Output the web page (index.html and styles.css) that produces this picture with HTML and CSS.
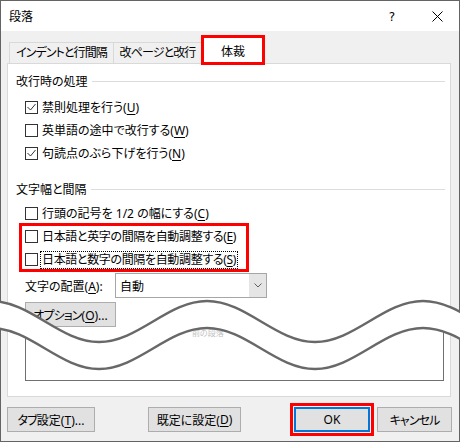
FILE: index.html
```html
<!DOCTYPE html>
<html lang="ja">
<head>
<meta charset="utf-8">
<title>段落</title>
<link rel="stylesheet" href="styles.css">
</head>
<body>
<div class="window">
  <div class="titlebar">
    <span class="title">段落</span>
    <span class="tb-btn help">?</span>
    <span class="tb-btn close"><svg width="11" height="11" viewBox="0 0 11 11"><path d="M0.5 0.5L10.5 10.5M10.5 0.5L0.5 10.5" stroke="#000" stroke-width="1" fill="none"/></svg></span>
  </div>
  <div class="tabs">
    <div class="tab tab-first"><span class="kana">インデントと行間隔</span></div>
    <div class="tab tab-second"><span class="kana">改ページと改行</span></div>
    <div class="tab tab-active">体裁</div>
  </div>
  <div class="panel">
    <div class="group-head"><span>改行時の処理</span><i class="rule"></i></div>
    <div class="rows">
      <div class="check-row"><span class="box"><svg width="11" height="11" viewBox="0 0 11 11"><polyline points="1.5,5 4.5,8 9.5,2" fill="none" stroke="#333" stroke-width="1"/></svg></span><span class="label">禁則処理を行う(<u>U</u>)</span></div>
      <div class="check-row"><span class="box"></span><span class="label">英単語の途中で改行する(<u>W</u>)</span></div>
      <div class="check-row"><span class="box"><svg width="11" height="11" viewBox="0 0 11 11"><polyline points="1.5,5 4.5,8 9.5,2" fill="none" stroke="#333" stroke-width="1"/></svg></span><span class="label">句読点のぶら下げを行う(<u>N</u>)</span></div>
    </div>
    <div class="group-head gh2"><span>文字幅と間隔</span><i class="rule"></i></div>
    <div class="check-row r4"><span class="box"></span><span class="label">行頭の記号を 1/2 の幅にする(<u>C</u>)</span></div>
    <div class="hl">
      <div class="check-row"><span class="box"></span><span class="label tight">日本語と英字の間隔を自動調整する(<u>E</u>)</span></div>
      <div class="check-row"><span class="box"></span><span class="label tight focus">日本語と数字の間隔を自動調整する(<u>S</u>)</span></div>
    </div>
    <div class="select-row">
      <span class="sel-label">文字の配置(<u>A</u>):</span>
      <div class="select"><span class="sel-value">自動</span><span class="sel-btn"><svg width="8" height="5" viewBox="0 0 8 5"><polyline points="0.5,0.5 4,4 7.5,0.5" fill="none" stroke="#606060" stroke-width="1"/></svg></span></div>
    </div>
    <div class="btn opt"><span><span class="kana">オプション</span>(<u>O</u>)...</span></div>
    <div class="preview"><div class="pv-text">前の段落</div></div>
  </div>
  <div class="footer">
    <div class="btn b-tab"><span><span class="kana">タブ</span>設定(<u>T</u>)...</span></div>
    <div class="btn b-def">既定に設定(<u>D</u>)</div>
    <div class="btn b-ok">OK</div>
    <div class="btn b-cancel"><span class="kana">キャンセル</span></div>
  </div>
</div>
<svg class="cut" width="460" height="442" viewBox="0 0 460 442">
  <path d="M-9 301 C30.3 301 59.7 342 99 342 C138.3 342 167.7 301 207 301 C246.3 301 275.7 342 315 342 C354.3 342 383.7 301 423 301 C462.3 301 491.7 342 531 342 L531 369 C491.7 369 462.3 328 423 328 C383.7 328 354.3 369 315 369 C275.7 369 246.3 328 207 328 C167.7 328 138.3 369 99 369 C59.7 369 30.3 328 -9 328 Z" fill="#fff"/>
  <path d="M-9 301 C30.3 301 59.7 342 99 342 C138.3 342 167.7 301 207 301 C246.3 301 275.7 342 315 342 C354.3 342 383.7 301 423 301 C462.3 301 491.7 342 531 342" fill="none" stroke="#686868" stroke-width="2.4"/>
  <path d="M-9 328 C30.3 328 59.7 369 99 369 C138.3 369 167.7 328 207 328 C246.3 328 275.7 369 315 369 C354.3 369 383.7 328 423 328 C462.3 328 491.7 369 531 369" fill="none" stroke="#686868" stroke-width="2.4"/>
</svg>
</body>
</html>
```

FILE: styles.css
```css
html, body {
  margin: 0;
  padding: 0;
}
body {
  width: 460px;
  height: 442px;
  overflow: hidden;
  font-family: "Noto Sans", "Noto Sans CJK JP", sans-serif;
  font-size: 12px;
  font-feature-settings: "palt" 1;
  color: #000;
}
.window {
  box-sizing: border-box;
  width: 460px;
  height: 442px;
  border: 1px solid #646464;
  background: #f0f0f0;
}
.titlebar {
  height: 30px;
  background: #fff;
  display: flex;
  align-items: center;
  padding-left: 8px;
}
.title {
  line-height: 16px;
  margin-top: 1px;
}
.tb-btn {
  height: 30px;
  display: flex;
  align-items: center;
  justify-content: center;
}
.help {
  margin-left: auto;
  width: 46px;
  font-family: "DejaVu Sans", sans-serif;
  font-size: 12px;
  margin-top: 1px;
}
.close {
  width: 44px;
}
.kana {
  letter-spacing: -0.9px;
}
.tabs {
  height: 32px;
  display: flex;
  align-items: flex-end;
  padding-left: 8px;
}
.tab {
  box-sizing: border-box;
  height: 21px;
  border-top: 1px solid #d9d9d9;
  display: flex;
  align-items: center;
  justify-content: center;
  line-height: 18px;
  white-space: nowrap;
}
.tab-first {
  width: 105px;
  border-left: 1px solid #d9d9d9;
  border-right: 1px solid #d9d9d9;
}
.tab-second {
  width: 87px;
}
.tab-active {
  width: 64px;
  height: 30px;
  margin-bottom: -2px;
  border: 3px solid #ff0000;
  background: #fff;
  align-items: flex-start;
  padding-top: 5px;
  position: relative;
  z-index: 1;
}
.panel {
  box-sizing: border-box;
  margin-left: 6px;
  width: 444px;
  height: 334px;
  border: 1px solid #d9d9d9;
  background: #fff;
  padding-top: 6px;
}
.group-head {
  height: 22px;
  display: flex;
  align-items: center;
  padding-left: 8px;
  white-space: nowrap;
}
.rule {
  flex: 1;
  height: 1px;
  background: #dcdcdc;
  margin-left: 4px;
  margin-right: 5px;
}
.rows {
  margin-top: 4px;
}
.gh2 {
  margin-top: 13px;
}
.check-row {
  height: 23px;
  display: flex;
  align-items: center;
  padding-left: 17px;
  white-space: nowrap;
}
.r4 {
  margin-top: 2px;
}
.box {
  box-sizing: border-box;
  width: 13px;
  height: 13px;
  border: 1px solid #333;
  background: #fff;
  margin-right: 2px;
  display: flex;
}
.label {
  border: 1px solid transparent;
  padding: 0 1px;
  line-height: 16px;
}
.label.tight {
  letter-spacing: -0.35px;
}
.label.focus {
  border: 1px dotted #000;
}
u {
  text-underline-offset: 2px;
}
.hl {
  position: relative;
}
.hl::after {
  content: "";
  position: absolute;
  left: 11px;
  top: -2px;
  bottom: -1px;
  width: 230px;
  box-sizing: border-box;
  border: 3px solid #ff0000;
  pointer-events: none;
}
.select-row {
  margin-top: 2px;
  height: 25px;
  display: flex;
  align-items: center;
  padding-left: 17px;
}
.sel-label {
  width: 90px;
  white-space: nowrap;
}
.select {
  box-sizing: border-box;
  width: 152px;
  height: 25px;
  border: 1px solid #a6a6a6;
  background: #fff;
  display: flex;
}
.sel-value {
  flex: 1;
  padding-left: 4px;
  display: flex;
  align-items: center;
}
.sel-btn {
  width: 17px;
  background: #e5e5e5;
  display: flex;
  align-items: center;
  justify-content: center;
}
.btn {
  box-sizing: border-box;
  height: 25px;
  border: 1px solid #adadad;
  background: #e1e1e1;
  display: flex;
  align-items: center;
  justify-content: center;
  white-space: nowrap;
}
.opt {
  margin-top: 4px;
  margin-left: 17px;
  width: 91px;
}
.preview {
  box-sizing: border-box;
  margin-left: 17px;
  width: 419px;
  height: 54px;
  border: 1px solid #707070;
  border-top: none;
  overflow: hidden;
}
.pv-text {
  padding-top: 1px;
  padding-left: 166px;
  font-size: 8px;
  line-height: 9px;
  color: #c2c2c2;
  white-space: nowrap;
}
.footer {
  display: flex;
  padding: 10px 7px 0 6px;
}
.b-tab {
  width: 88px;
}
.b-def {
  width: 93px;
  margin-left: 53px;
}
.b-ok {
  width: 76px;
  margin-left: auto;
  border: 2px solid #0078d7;
  position: relative;
}
.b-ok::after {
  content: "";
  position: absolute;
  left: -6px;
  right: -6px;
  top: -6px;
  bottom: -6px;
  border: 3px solid #ff0000;
  pointer-events: none;
}
.b-cancel {
  width: 75px;
  margin-left: 7px;
}
.cut {
  position: absolute;
  left: 0;
  top: 0;
  pointer-events: none;
}
```
